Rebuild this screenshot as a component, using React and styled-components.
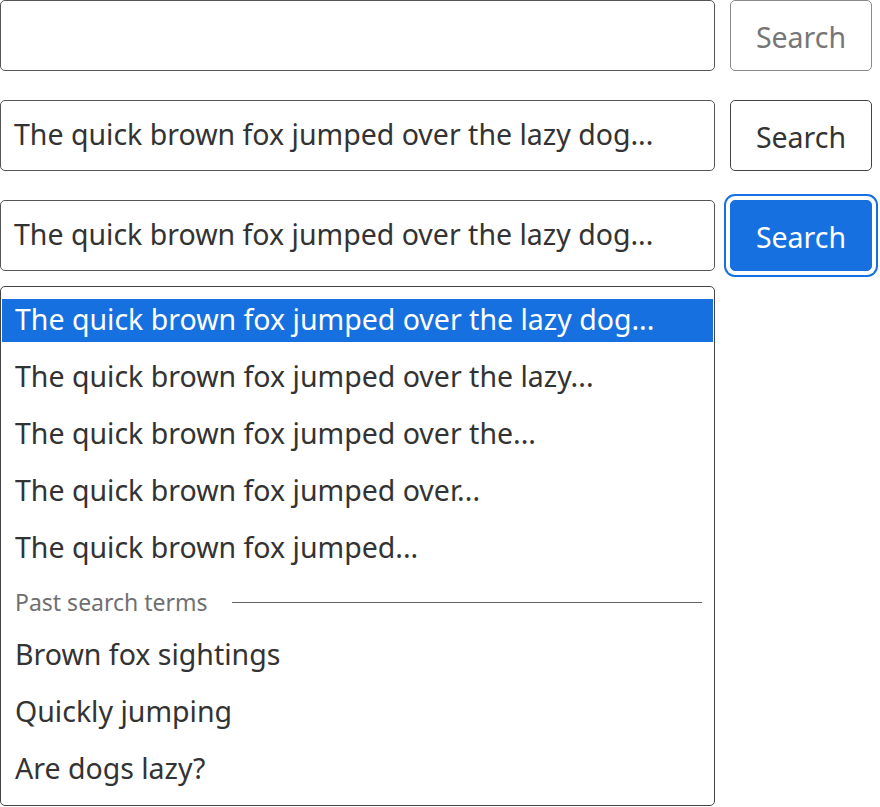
import React from 'react'
import styled, { createGlobalStyle } from 'styled-components'

const GlobalStyle = createGlobalStyle`
  body {
    margin: 0;
    background: #fff;
    font-family: "Noto Sans", "Open Sans", sans-serif;
  }
`

const suggestions = [
  'The quick brown fox jumped over the lazy dog...',
  'The quick brown fox jumped over the lazy...',
  'The quick brown fox jumped over the...',
  'The quick brown fox jumped over...',
  'The quick brown fox jumped...',
]

const past = ['Brown fox sightings', 'Quickly jumping', 'Are dogs lazy?']

function App() {
  return (
    <Page>
      <GlobalStyle />
      <Row>
        <Field />
        <Button variant="disabled">Search</Button>
      </Row>
      <Row>
        <Field>The quick brown fox jumped over the lazy dog...</Field>
        <Button>Search</Button>
      </Row>
      <Group>
        <Row>
          <Field>The quick brown fox jumped over the lazy dog...</Field>
          <Button variant="active">Search</Button>
        </Row>
        <Menu>
          <Items>
            {suggestions.map((s, i) => (
              <Item key={s} selected={i === 0}>{s}</Item>
            ))}
          </Items>
          <Divider>
            <DividerLabel>Past search terms</DividerLabel>
            <DividerLine />
          </Divider>
          <Items>
            {past.map((s) => (
              <Item key={s}>{s}</Item>
            ))}
          </Items>
        </Menu>
      </Group>
    </Page>
  )
}

export default App

const Page = styled.div`
  display: flex;
  flex-direction: column;
  gap: 29px;
  width: 872px;
`
const Group = styled.div`
  display: flex;
  flex-direction: column;
  gap: 15px;
`
const Row = styled.div`
  display: grid;
  grid-template-columns: 715px 142px;
  column-gap: 15px;
`
const Field = styled.div`
  box-sizing: border-box;
  height: 71px;
  border: 1px solid #555;
  border-radius: 5px;
  padding: 0 13px 3px;
  display: flex;
  align-items: center;
  font-size: 28.5px;
  color: #333;
  white-space: nowrap;
`
const Button = styled.div`
  box-sizing: border-box;
  height: 71px;
  border-radius: 5px;
  display: flex;
  align-items: center;
  justify-content: center;
  font-size: 28.5px;
  padding-top: 2px;
  border: 1px solid ${(p) => (p.variant === 'disabled' ? '#8a8a8a' : p.variant === 'active' ? '#1670e0' : '#444')};
  color: ${(p) => (p.variant === 'disabled' ? '#767676' : p.variant === 'active' ? '#fff' : '#333')};
  background: ${(p) => (p.variant === 'active' ? '#1670e0' : '#fff')};
  box-shadow: ${(p) => (p.variant === 'active' ? '0 0 0 4px #fff, 0 0 0 6px #1670e0' : 'none')};
`
const Menu = styled.div`
  box-sizing: border-box;
  width: 715px;
  border: 1px solid #444;
  border-radius: 5px;
  padding: 12px 0 14px;
`
const Items = styled.div`
  display: flex;
  flex-direction: column;
  gap: 14px;
`
const Item = styled.div`
  box-sizing: border-box;
  height: 43px;
  display: flex;
  align-items: center;
  padding: 0 13px 3px;
  margin: 0 1px;
  font-size: 28.5px;
  white-space: nowrap;
  color: ${(p) => (p.selected ? '#fff' : '#333')};
  background: ${(p) => (p.selected ? '#1670e0' : 'transparent')};
`
const Divider = styled.div`
  display: flex;
  align-items: center;
  gap: 24px;
  padding: 0 12px 0 14px;
  height: 64px;
`
const DividerLabel = styled.span`
  font-size: 23px;
  color: #707070;
  white-space: nowrap;
`
const DividerLine = styled.div`
  flex: 1;
  height: 1px;
  background: #666;
`
